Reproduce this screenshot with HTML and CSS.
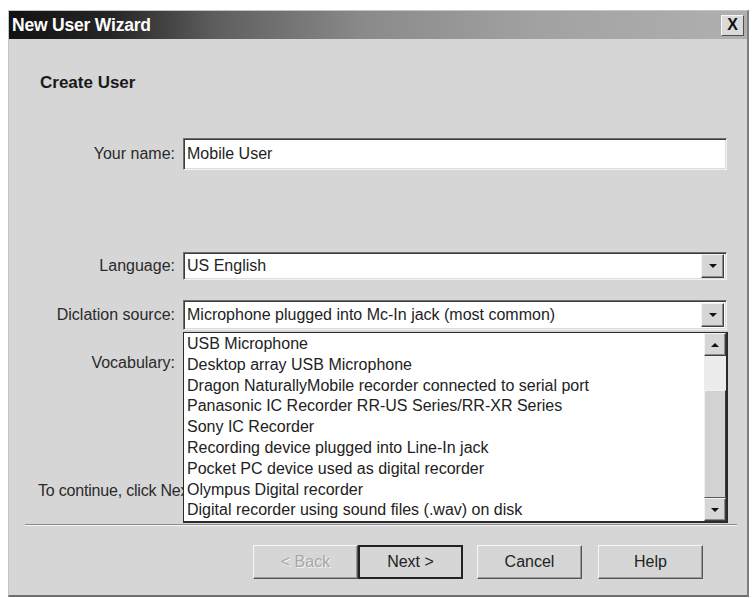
FILE: index.html
```html
<!DOCTYPE html>
<html>

<head>
    <title>New User Wizard</title>
    <link rel="stylesheet" href="styles.css">
</head>

<body>
    <div class="window">
        <div class="titlebar">
            <span class="title">New User Wizard</span>
            <span class="close">X</span>
        </div>
        <div class="content">
            <h1 class="heading">Create User</h1>

            <div class="row row-name">
                <label>Your name:</label>
                <div class="field field-name">Mobile User</div>
            </div>

            <div class="row row-lang">
                <label>Language:</label>
                <div class="field combo">
                    <span>US English</span>
                    <span class="arrow"><i class="tri-down"></i></span>
                </div>
            </div>

            <div class="row row-source">
                <label>Diclation source:</label>
                <div class="field combo">
                    <span>Microphone plugged into Mc-In jack (most common)</span>
                    <span class="arrow"><i class="tri-down"></i></span>
                </div>
            </div>

            <div class="row row-vocab">
                <label>Vocabulary:</label>
            </div>

            <p class="hint">To continue, click Next.</p>

            <div class="separator"></div>

            <div class="buttons">
                <button class="btn btn-back" disabled>&lt; Back</button>
                <button class="btn btn-next">Next &gt;</button>
                <button class="btn btn-cancel">Cancel</button>
                <button class="btn btn-help">Help</button>
            </div>
        </div>

        <!-- open dropdown of the dictation source combo -->
        <div class="droplist">
            <ul class="items">
                <li>USB Microphone</li>
                <li>Desktop array USB Microphone</li>
                <li>Dragon NaturallyMobile recorder connected to serial port</li>
                <li>Panasonic IC Recorder RR-US Series/RR-XR Series</li>
                <li>Sony IC Recorder</li>
                <li>Recording device plugged into Line-In jack</li>
                <li>Pocket PC device used as digital recorder</li>
                <li>Olympus Digital recorder</li>
                <li>Digital recorder using sound files (.wav) on disk</li>
            </ul>
            <div class="scrollbar">
                <span class="sb-btn"><i class="tri-up"></i></span>
                <span class="sb-track"></span>
                <span class="sb-thumb"></span>
                <span class="sb-btn"><i class="tri-down"></i></span>
            </div>
        </div>
    </div>
</body>

</html>
```

FILE: styles.css
```css
body {
    margin: 0;
    background-color: #ffffff;
    font-family: "Liberation Sans", Arial, sans-serif;
    color: #1e1e1e;
}

.window {
    position: relative;
    margin: 10px 0 0 8px;
    width: 741px;
    height: 587px;
    box-sizing: border-box;
    background-color: #d6d6d6;
    border: 1px solid #c4c4c4;
    border-right: 2px solid #7e7e7e;
    border-bottom: 2px solid #6e6e6e;
}

.titlebar {
    height: 28px;
    display: flex;
    align-items: center;
    justify-content: space-between;
    padding: 0 3px 0 3px;
    background: linear-gradient(90deg, #121212 0%, #262626 14%, #5e5e5e 28%, #8a8a8a 48%, #a2a2a2 72%, #b0b0b0 100%);
}

.title {
    color: #ffffff;
    font-weight: bold;
    font-size: 17.5px;
    letter-spacing: -0.2px;
}

.close {
    width: 23px;
    height: 21px;
    box-sizing: border-box;
    display: flex;
    align-items: center;
    justify-content: center;
    background-color: #dadada;
    border: 1px solid;
    border-color: #f6f6f6 #505050 #505050 #f6f6f6;
    font-size: 16px;
    font-weight: bold;
    color: #111;
}

.heading {
    margin: 34px 0 0 31px;
    font-size: 17px;
    line-height: 20px;
    font-weight: bold;
    color: #1a1a1a;
}

.row {
    display: flex;
    align-items: center;
}

.row label {
    width: 174px;
    box-sizing: border-box;
    padding-right: 8px;
    text-align: right;
    font-size: 16px;
    color: #2a2a2a;
}

.field {
    width: 544px;
    box-sizing: border-box;
    background-color: #ffffff;
    border: 1px solid;
    border-color: #6e6e6e #f2f2f2 #f2f2f2 #6e6e6e;
    box-shadow: inset 1px 1px 0 #3c3c3c, inset -1px -1px 0 #dcdcdc;
    font-size: 16px;
    padding-left: 3px;
    display: flex;
    align-items: center;
}

.row-name {
    margin-top: 45px;
}

.field-name {
    height: 32px;
}

.row-lang {
    margin-top: 82px;
}

.row-lang .field {
    height: 28px;
}

.row-source {
    margin-top: 20px;
}

.row-source .field {
    height: 30px;
}

.row-vocab {
    margin-top: 18px;
    height: 30px;
}

.combo {
    justify-content: space-between;
    padding-right: 2px;
}

.arrow {
    width: 23px;
    height: 24px;
    box-sizing: border-box;
    background-color: #d6d6d6;
    border: 1px solid;
    border-color: #f4f4f4 #404040 #404040 #f4f4f4;
    box-shadow: inset -1px -1px 0 #8a8a8a;
    display: flex;
    align-items: center;
    justify-content: center;
}

.tri-down {
    width: 0;
    height: 0;
    border-left: 4px solid transparent;
    border-right: 4px solid transparent;
    border-top: 4px solid #111;
}

.tri-up {
    width: 0;
    height: 0;
    border-left: 4px solid transparent;
    border-right: 4px solid transparent;
    border-bottom: 4px solid #111;
}

.hint {
    margin: 104px 0 0 29px;
    font-size: 16px;
    line-height: 18px;
    letter-spacing: -0.2px;
    color: #2a2a2a;
}

.separator {
    margin: 24px 0 0 16px;
    width: 712px;
    height: 1px;
    background-color: #8a8a8a;
    border-bottom: 1px solid #f6f6f6;
}

.buttons {
    display: flex;
    margin: 19px 0 0 244px;
}

.btn {
    width: 105px;
    height: 34px;
    box-sizing: border-box;
    background-color: #d6d6d6;
    border: 1px solid;
    border-color: #f6f6f6 #555555 #555555 #f6f6f6;
    box-shadow: inset -1px -1px 0 #9a9a9a;
    font-family: "Liberation Sans", Arial, sans-serif;
    font-size: 16px;
    color: #222;
    padding: 0;
}

.btn-back {
    color: #a8a8a8;
    text-shadow: 1px 1px 0 #f4f4f4;
}

.btn-next {
    border: 2px solid #222;
    box-shadow: none;
}

.btn-cancel {
    margin-left: 14px;
}

.btn-help {
    margin-left: 16px;
}

.droplist {
    position: absolute;
    left: 174px;
    top: 321px;
    width: 545px;
    height: 191px;
    box-sizing: border-box;
    background-color: #ffffff;
    border: 1px solid #2a2a2a;
    border-right-width: 2px;
    border-bottom-width: 2px;
    display: flex;
}

.items {
    flex: 1;
    margin: 0;
    padding: 0;
    list-style: none;
    overflow: hidden;
}

.items li {
    height: 20.8px;
    line-height: 21px;
    padding-left: 3px;
    font-size: 16px;
    color: #222;
    white-space: nowrap;
}

.scrollbar {
    width: 22px;
    display: flex;
    flex-direction: column;
}

.sb-btn {
    height: 23px;
    box-sizing: border-box;
    background-color: #d6d6d6;
    border: 1px solid;
    border-color: #f4f4f4 #404040 #404040 #f4f4f4;
    box-shadow: inset -1px -1px 0 #8a8a8a;
    display: flex;
    align-items: center;
    justify-content: center;
}

.sb-track {
    height: 34px;
    background-color: #ececec;
}

.sb-thumb {
    flex: 1;
    box-sizing: border-box;
    background-color: #d2d2d2;
    border: 1px solid;
    border-color: #f0f0f0 #3a3a3a #5a5a5a #f0f0f0;
}
```
